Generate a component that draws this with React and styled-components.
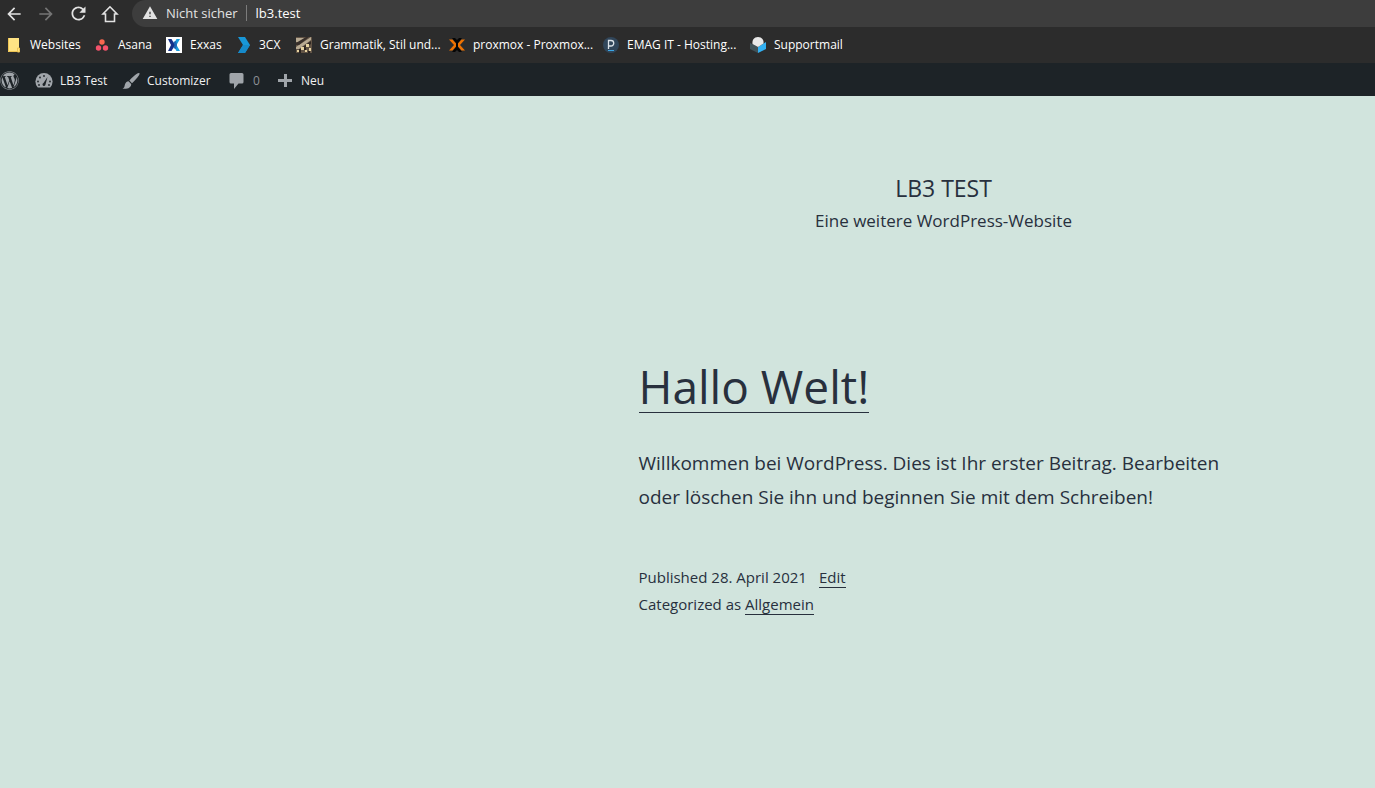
import React from 'react';
import styled, { createGlobalStyle } from 'styled-components';
import { MdArrowBack, MdArrowForward, MdRefresh, MdWarning } from 'react-icons/md';
import { FaWordpress } from 'react-icons/fa';

const GlobalStyle = createGlobalStyle`
  *, *::before, *::after { box-sizing: border-box; }
  body {
    margin: 0;
    background: #d1e4dd;
    color: #28303d;
    font-family: "Segoe UI", "Open Sans", "Noto Sans", sans-serif;
  }
`;

const Toolbar = styled.div`
  display: flex;
  align-items: center;
  height: 27px;
  padding-left: 4px;
  background: #2c2c2c;
`;

const NavButton = styled.button`
  display: flex;
  align-items: center;
  justify-content: center;
  width: 20px;
  height: 26px;
  margin-right: 12px;
  padding: 0;
  border: 0;
  background: none;
  color: ${(p) => (p.disabled ? '#757575' : '#e2e2e2')};
  svg { flex: none; }
`;

const AddressBar = styled.form`
  display: flex;
  align-items: center;
  flex: 1;
  height: 27px;
  padding: 0 0 1px 10px;
  border-radius: 14px 0 0 14px;
  background: #3d3d3d;
  color: #e2e2e2;
  font-size: 13px;
`;

const Security = styled.span`
  display: flex;
  align-items: center;
  gap: 8px;
  padding-right: 8px;
  border-right: 1px solid #7c7c7c;
  line-height: 16px;
  white-space: nowrap;
`;

const AddressInput = styled.input`
  flex: 1;
  min-width: 0;
  padding: 0 9px;
  border: 0;
  outline: 0;
  background: none;
  color: #ffffff;
  font: inherit;
`;

const Bookmarks = styled.nav`
  display: flex;
  align-items: center;
  height: 36px;
  padding-left: 6px;
  background: #2c2c2c;
`;

const Bookmark = styled.a`
  display: flex;
  align-items: center;
  gap: 8px;
  flex: none;
  width: ${(p) => p.$width}px;
  color: #ffffff;
  font-size: 12px;
  line-height: 16px;
  white-space: nowrap;
  text-decoration: none;
  svg { flex: none; }
`;

const AdminBar = styled.nav`
  display: flex;
  align-items: center;
  height: 33px;
  padding-top: 2px;
  background: #1d2327;
`;

const AdminItem = styled.a`
  display: flex;
  align-items: center;
  gap: 6px;
  flex: none;
  width: ${(p) => p.$width}px;
  color: ${(p) => (p.$muted ? '#8c9196' : '#f0f0f1')};
  font-size: 12px;
  font-weight: 500;
  line-height: 20px;
  white-space: nowrap;
  text-decoration: none;
  svg { flex: none; color: #a0a5aa; }
`;

const Page = styled.div`
  padding: 72px 0 80px 512px;
`;

const Column = styled.div`
  max-width: 610px;
  margin: 0 auto;
`;

const SiteHeader = styled.header`
  text-align: center;
`;

const SiteTitle = styled.p`
  margin: 0;
  font-size: 23px;
  line-height: 40px;
  text-transform: uppercase;
`;

const Tagline = styled.p`
  margin: 0;
  font-size: 17px;
  line-height: 26px;
`;

const Article = styled.article`
  padding-top: 122px;
`;

const TextLink = styled.a`
  color: inherit;
  text-decoration: none;
  border-bottom: 1px solid #28303d;
`;

const EntryTitle = styled.h2`
  margin: 0;
  font-size: 46px;
  font-weight: 400;
  line-height: 60px;
  a { display: inline-block; line-height: 52px; }
`;

const EntryText = styled.p`
  margin: 30px 0 50px;
  font-size: 19px;
  line-height: 34px;
`;

const Meta = styled.p`
  margin: 0;
  font-size: 15px;
  line-height: 27px;
  a { display: inline-block; line-height: 20px; }
`;

const EditLink = styled(TextLink)`
  margin-left: 12px;
`;

const FolderIcon = () => (
  <svg width="16" height="16" viewBox="0 0 16 16" aria-hidden="true">
    <path d="M2 1h11v10h1v4H2z" fill="#ffe384" />
    <path d="M2.5 1v13.5h9M11.5 15v-4h2v4z" fill="none" stroke="#eec454" />
  </svg>
);

const AsanaIcon = () => (
  <svg width="16" height="16" viewBox="0 0 16 16" aria-hidden="true">
    <circle cx="8" cy="5" r="2.700" fill="#f8674f" />
    <circle cx="4.500" cy="11" r="2.700" fill="#f4526b" />
    <circle cx="11.500" cy="11" r="2.700" fill="#f4526b" />
  </svg>
);

const ExxasIcon = () => (
  <svg width="16" height="16" viewBox="0 0 16 16" aria-hidden="true">
    <path d="M0 0h16v16H0z" fill="#fff" />
    <path d="M14 2h-3.500L7 8l3.500 6H14l-3.500-6z" fill="#189ddd" />
    <path d="M2 2h3.500L9 8l-3.500 6H2l3-6z" fill="#14308a" />
    <path d="M7 5l2 3-2 3 3 1 1-4-1-4z" fill="#1b66b6" />
  </svg>
);

const ThreeCxIcon = () => (
  <svg width="16" height="16" viewBox="0 0 16 16" aria-hidden="true">
    <path d="M3 0h7l5 8-5 8H3l5-8z" fill="#1897d8" />
    <path d="M8 8h7l-5 8H3z" fill="#168aca" />
  </svg>
);

const GrammarIcon = () => (
  <svg width="16" height="16" viewBox="0 0 16 16" aria-hidden="true">
    <path d="M0 0h16v16H0z" fill="#625446" />
    <path d="M0 1h9L3 5H0zM15 0v3L3 12H0v-2z" fill="#b8aa92" />
    <path d="M10 0h3L3 8H0V6z" fill="#382f2a" />
    <path d="M15 4v3L6 13H3z" fill="#312923" />
    <g fill="#e6d2a0">
      <path d="M10 7h3v3h-3zM5 10h3v3H5zM13 11h2v3h-2zM1 13h2v2H1zM9 13h2v2H9z" />
    </g>
    <path d="M3 12h2v4H3zM8 11h2v2H8zM12 14h2v2h-2z" fill="#29221f" />
  </svg>
);

const ProxmoxIcon = () => (
  <svg width="16" height="16" viewBox="0 0 16 16" aria-hidden="true">
    <path d="M3 1h3l2 2 2-2h3L8 7.500zM3 15h3l2-2 2 2h3L8 8.500z" fill="#050505" />
    <path d="M0 2.500h3.500L8 7.500v1l-4.500 5H0L5 8zM16 2.500h-3.500L8 7.500v1l4.500 5H16L11 8z" fill="#ed7203" />
    <path d="M7 6h2v4H7z" fill="#050505" />
  </svg>
);

const HostingIcon = () => (
  <svg width="16" height="16" viewBox="0 0 16 16" aria-hidden="true">
    <circle cx="8" cy="8" r="8" fill="#31465a" />
    <path d="M5.500 12V3.500h2.500a2.500 2.500 0 0 1 0 5.500H6" fill="none" stroke="#dce3e9" strokeWidth="1.300" />
    <path d="M5 13h6v1H5z" fill="#3ba7e5" />
  </svg>
);

const MailIcon = () => (
  <svg width="16" height="16" viewBox="0 0 16 16" aria-hidden="true">
    <path d="M0 6l8 4v6l-8-4z" fill="#405258" />
    <path d="M16 5l-8 5v6l8-4z" fill="#32b0f2" />
    <path d="M8 0c4 0 6 3 5.500 6.500L8 10 2.500 7C2 3 4 0 8 0z" fill="#e8e8e8" />
  </svg>
);

const DashboardIcon = () => (
  <svg width="20" height="20" viewBox="0 0 20 20" aria-hidden="true">
    <path d="M3.800 16.500h12.400A8.600 8.600 0 1 0 3.800 16.500z" fill="currentColor" />
    <g fill="#1d2327">
      <circle cx="10" cy="5" r=".9" />
      <circle cx="6" cy="6.500" r=".9" />
      <circle cx="4" cy="10.500" r=".9" />
      <circle cx="16" cy="10.500" r=".9" />
      <circle cx="5" cy="14" r=".9" />
      <circle cx="15" cy="14" r=".9" />
      <path d="M13.500 6l-2 7.500a1.500 1.500 0 1 1-2-1.500z" />
    </g>
  </svg>
);

const BrushIcon = () => (
  <svg width="20" height="20" viewBox="0 0 20 20" aria-hidden="true">
    <path
      d="M18.300 2.100c.5.5.3 1.300-.3 2.200-2 3-4.600 5.800-7 7.900L8.400 9.600c2.300-2.700 5-5.200 7.800-7.100.9-.6 1.700-.8 2.100-.4zM7.500 10.300l2.700 2.600c.2 3.400-3.700 5.600-8.700 4.800 2.400-1 1.800-2.700 2.600-4.700.6-1.500 1.900-2.500 3.400-2.700z"
      fill="currentColor"
    />
  </svg>
);

const CommentIcon = () => (
  <svg width="20" height="20" viewBox="0 0 20 20" aria-hidden="true">
    <path d="M4 2h11q1.500 0 1.500 1.500V11q0 1.500-1.500 1.500h-3.500L7 18v-5.500H4q-1.500 0-1.500-1.500V3.500Q2.500 2 4 2z" fill="currentColor" />
  </svg>
);

const PlusIcon = () => (
  <svg width="20" height="20" viewBox="0 0 20 20" aria-hidden="true">
    <path d="M9 3h3v5h5v3h-5v5H9v-5H3V8h6z" fill="currentColor" />
  </svg>
);

const bookmarks = [
  { label: 'Websites', Icon: FolderIcon, width: 88 },
  { label: 'Asana', Icon: AsanaIcon, width: 72 },
  { label: 'Exxas', Icon: ExxasIcon, width: 69 },
  { label: '3CX', Icon: ThreeCxIcon, width: 61 },
  { label: 'Grammatik, Stil und...', Icon: GrammarIcon, width: 153 },
  { label: 'proxmox - Proxmox...', Icon: ProxmoxIcon, width: 154 },
  { label: 'EMAG IT - Hosting...', Icon: HostingIcon, width: 147 },
  { label: 'Supportmail', Icon: MailIcon, width: 96 },
];

export default function App() {
  return (
    <>
      <GlobalStyle />
      <Toolbar>
        <NavButton aria-label="Zurück"><MdArrowBack size={20} /></NavButton>
        <NavButton aria-label="Vorwärts" disabled><MdArrowForward size={20} /></NavButton>
        <NavButton aria-label="Neu laden"><MdRefresh size={21} /></NavButton>
        <NavButton aria-label="Startseite">
          <svg width="20" height="20" viewBox="0 0 20 20" aria-hidden="true">
            <path d="M10 2.800L3 10h2.500v7.500h9V10H17z" fill="none" stroke="currentColor" strokeWidth="1.600" />
          </svg>
        </NavButton>
        <AddressBar>
          <Security><MdWarning size={16} />Nicht sicher</Security>
          <AddressInput aria-label="Adresse" defaultValue="lb3.test" />
        </AddressBar>
      </Toolbar>
      <Bookmarks aria-label="Lesezeichen">
        {bookmarks.map(({ label, Icon, width }) => (
          <Bookmark key={label} href="#" $width={width}><Icon />{label}</Bookmark>
        ))}
      </Bookmarks>
      <AdminBar aria-label="Werkzeugleiste">
        <AdminItem href="#" $width={34} aria-label="WordPress"><FaWordpress size={19} /></AdminItem>
        <AdminItem href="#" $width={87}><DashboardIcon />LB3 Test</AdminItem>
        <AdminItem href="#" $width={106}><BrushIcon />Customizer</AdminItem>
        <AdminItem href="#" $width={48} $muted><CommentIcon />0</AdminItem>
        <AdminItem href="#" $width={60}><PlusIcon />Neu</AdminItem>
      </AdminBar>
      <Page>
        <Column>
          <SiteHeader>
            <SiteTitle>LB3 Test</SiteTitle>
            <Tagline>Eine weitere WordPress-Website</Tagline>
          </SiteHeader>
          <Article>
            <EntryTitle><TextLink href="#">Hallo Welt!</TextLink></EntryTitle>
            <EntryText>
              Willkommen bei WordPress. Dies ist Ihr erster Beitrag. Bearbeiten oder löschen Sie ihn und beginnen Sie mit dem Schreiben!
            </EntryText>
            <Meta>Published 28. April 2021<EditLink href="#">Edit</EditLink></Meta>
            <Meta>Categorized as <TextLink href="#">Allgemein</TextLink></Meta>
          </Article>
        </Column>
      </Page>
    </>
  );
}
